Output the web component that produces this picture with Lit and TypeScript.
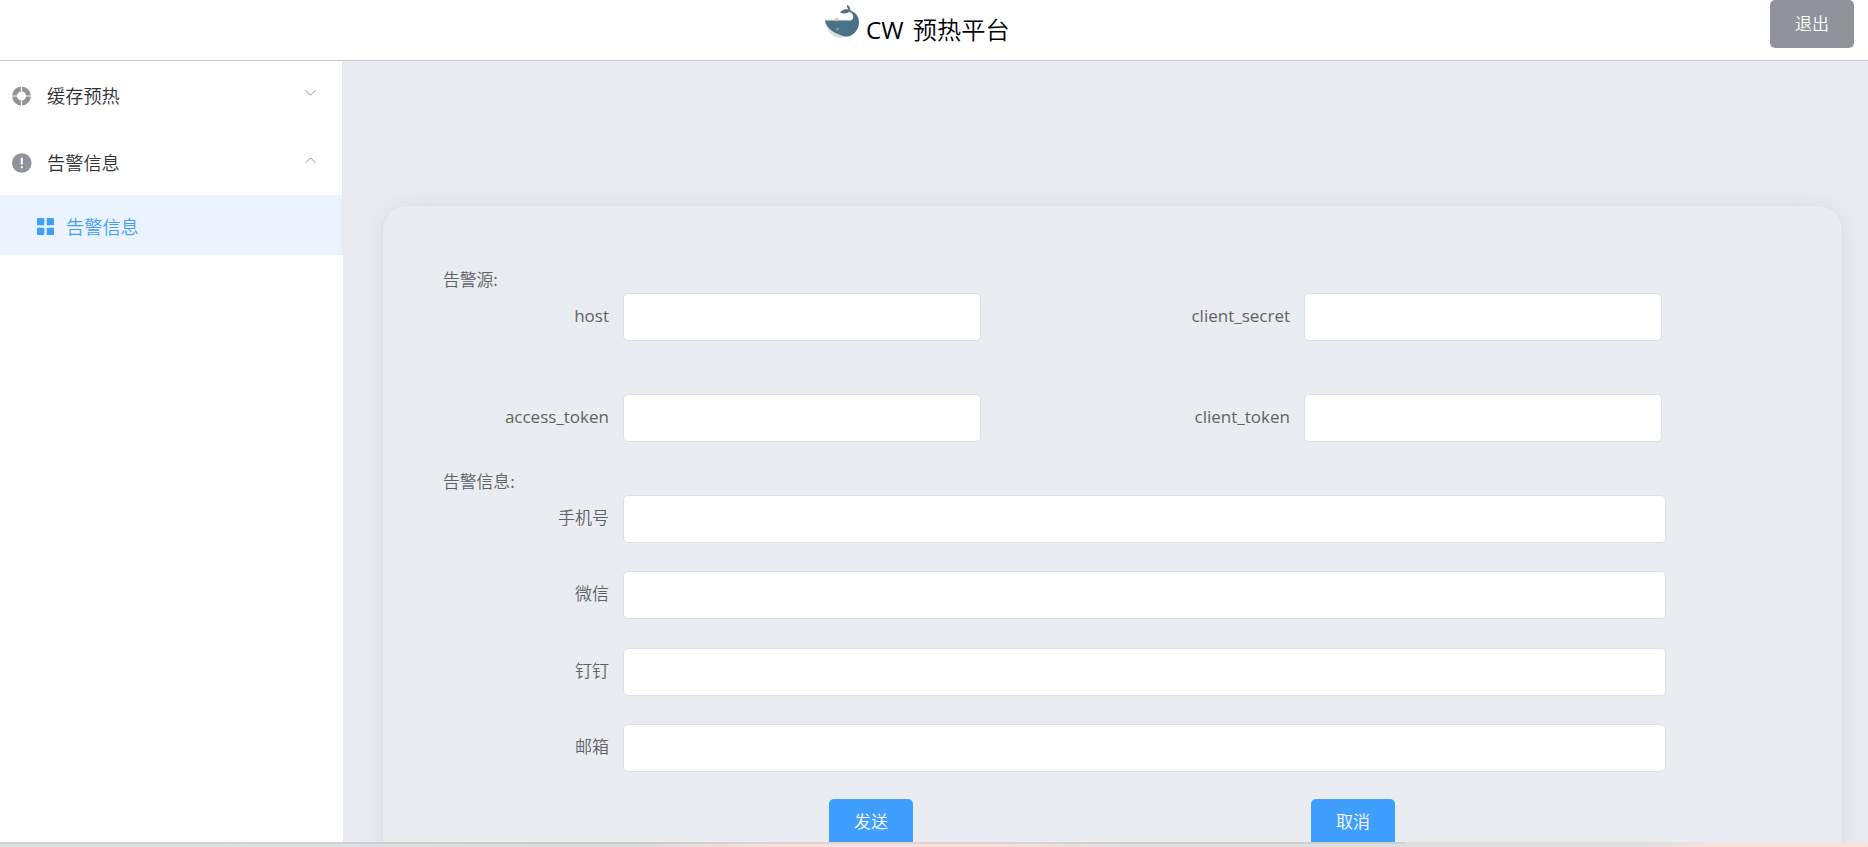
import { LitElement, html, css, svg } from "lit";
import { customElement } from "lit/decorators.js";

const FONT = css`"Noto Sans CJK SC", "Noto Sans", sans-serif`;

@customElement("form-field")
class FormField extends LitElement {
  static properties = { label: {} };
  declare label: string;
  static styles = css`
    :host { display: flex; height: 48px; }
    .label { width: 167px; padding-right: 14px; text-align: right; font-size: 17px; line-height: 43px; color: #606266; box-sizing: border-box; flex: none; white-space: nowrap; font-family: ${FONT}; font-weight: 350; }
    .latin { font-family: "Open Sans", sans-serif; font-weight: 400; line-height: 45px; }
    .input { flex: 1; min-width: 0; box-sizing: border-box; height: 48px; border: 1px solid #dcdfe6; border-radius: 5px; background: #fff; outline: none; padding: 0 18px; font: 16.8px ${FONT}; color: #606266; }
  `;
  render() {
    const latin = /^[a-z_]+$/.test(this.label);
    return html`<label class="label ${latin ? "latin" : ""}" for="field">${this.label}</label><input id="field" class="input" type="text" />`;
  }
}

const whale = svg`<svg class="whale" viewBox="0 0 34 33">
  <path d="M0 16.200Q1 27 9.500 31.500Q14 33.500 20 32.200L24 28L3 16Z" fill="#dcdcde"/>
  <path d="M0 15.600H23.500C26.500 15.600 28.300 14.500 28.300 12C28.300 9.500 26.500 7.600 24.500 6.800C21.500 8.800 18 8.900 15 7.600C17 4.600 20.500 3.400 23.600 4.600C22.300 3 21.900 1.500 22 0C24.500 .8 25.300 2.500 25.200 5.300C30.500 7.500 34 11 34 17C34 25.500 28.500 30.500 21.500 31.800C10 29.500 1.200 23.500 0 15.600Z" fill="#4a7188"/>
  <path d="M0 15.300H23" stroke="#9cb0bb" stroke-width=".8"/>
  <path d="M10.500 13.700H13M11.700 13.200V16.500" stroke="#e8b85e" stroke-width="1.200"/>
  <circle cx="12.500" cy="24" r="1.500" fill="#7896a7"/>
</svg>`;

@customElement("app-root")
class AppRoot extends LitElement {
  static styles = css`
    :host { display: flex; flex-direction: column; width: 100%; height: 847px; overflow: hidden; font-family: ${FONT}; font-weight: 350; background: #e9edf1; }
    .header { height: 60px; flex: none; border-bottom: 1px solid #c8c9cb; background: #fff; display: grid; grid-template-columns: 825px 1fr 98px; }
    .brand { grid-column: 2; display: flex; gap: 7px; }
    .whale { width: 34px; height: 33px; margin-top: 5px; }
    .title { font-size: 24.2px; line-height: 58px; color: #000; white-space: pre; word-spacing: 3px; }
    .latin { font-family: "Open Sans", sans-serif; font-weight: 400; }
    .btn { font-family: ${FONT}; font-weight: 350; box-sizing: border-box; width: 84px; height: 48px; border: 0; padding: 0 0 4px; border-radius: 5px; color: #fff; font-size: 17px; }
    .exit { background: #909399; }
    .primary { background: #409eff; }
    .body { flex: 1; min-height: 0; display: flex; overflow: hidden; }
    .side { width: 343px; flex: none; background: #fff; }
    .menu { border-right: 1px solid #e6e6e6; }
    .item { height: 67px; display: flex; align-items: center; padding: 0 25px 0 12px; color: #303133; font-size: 18.2px; }
    .icon { width: 20px; height: 20px; flex: none; margin: 2px 15px 0 0; color: #909399; }
    .item span { flex: 1; }
    .arrow { width: 12px; height: 8px; margin-bottom: 3px; }
    .sub { height: 60px; display: flex; align-items: center; padding-left: 37px; background: #ebf3ff; color: #409eff; font-size: 18.2px; }
    .sub span { padding-top: 2px; }
    .grid-icon { width: 17px; height: 17px; margin: 2px 12px 0 0; }
    .main { flex: 1; padding: 144px 25px 0 39px; }
    .card { box-sizing: border-box; height: 760px; border: 1px solid #dcdfe4; border-radius: 24px; background: #e9edf1; box-shadow: 0 0 30px rgba(202, 198, 206, .42); padding: 60px 58px 0 60px; }
    .section { height: 27px; line-height: 26px; font-size: 16.8px; color: #606266; }
    .pairs { display: grid; grid-template-columns: 525px 525px; column-gap: 156px; row-gap: 53px; padding-left: 13px; }
    .pairs + .section { margin-top: 26px; }
    .rows { display: grid; gap: 28.300px; width: 1210px; padding-left: 13px; }
    .actions { display: flex; gap: 398px; margin: 27px 0 0 386px; }
    .taskbar { height: 5px; flex: none; background: linear-gradient(90deg, #dbe4e3 0 12%, #dadcdb 34%, #f9e2dc 42%, #f9e2dc 53%, #dfdfdd 60%, #dfdfdd 88%, #f9e2dc 92%, #f9e2dc); }
    .progress { height: 2px; width: 1405px; background: rgba(110, 110, 110, .14); }
  `;
  render() {
    return html`
      <header class="header">
        <div class="brand">${whale}<div class="title"><span class="latin">CW </span>预热平台</div></div>
        <button class="btn exit">退出</button>
      </header>
      <div class="body">
        <aside class="side">
          <nav class="menu">
            <div class="item">
              <svg class="icon" viewBox="0 0 20 20"><circle cx="9.500" cy="10" r="7" fill="none" stroke="currentColor" stroke-width="4.800"/><path d="M9.500 0V5.500M9.500 14.500V20M0 10H5M14 10H20" stroke="#fff" stroke-width="1.200"/></svg>
              <span>缓存预热</span>
              <svg class="arrow" viewBox="0 0 12 8"><path d="M.5 1.200L5.500 6.200L10.500 1.200" fill="none" stroke="#909399"/></svg>
            </div>
            <div class="item">
              <svg class="icon" viewBox="0 0 20 20"><circle cx="9.800" cy="10" r="9.800" fill="currentColor"/><path d="M9.800 4.700V11.500M9.800 13.300V15.300" stroke="#fff" stroke-width="2"/></svg>
              <span>告警信息</span>
              <svg class="arrow" viewBox="0 0 12 8"><path d="M.5 6.800L5.500 1.800L10.500 6.800" fill="none" stroke="#909399"/></svg>
            </div>
            <div class="sub">
              <svg class="grid-icon" viewBox="0 0 17 17" fill="#409eff"><rect width="7.300" height="7.300" rx=".8"/><rect x="9.700" width="7.300" height="7.300" rx=".8"/><rect y="9.700" width="7.300" height="7.300" rx=".8"/><rect x="9.700" y="9.700" width="7.300" height="7.300" rx=".8"/></svg>
              <span>告警信息</span>
            </div>
          </nav>
        </aside>
        <main class="main">
          <div class="card">
            <div class="section">告警源:</div>
            <div class="pairs">
              ${["host", "client_secret", "access_token", "client_token"].map((l) => html`<form-field .label=${l}></form-field>`)}
            </div>
            <div class="section">告警信息:</div>
            <div class="rows">
              ${["手机号", "微信", "钉钉", "邮箱"].map((l) => html`<form-field .label=${l}></form-field>`)}
            </div>
            <div class="actions">
              <button class="btn primary">发送</button>
              <button class="btn primary">取消</button>
            </div>
          </div>
        </main>
      </div>
      <div class="taskbar"><div class="progress"></div></div>
    `;
  }
}
